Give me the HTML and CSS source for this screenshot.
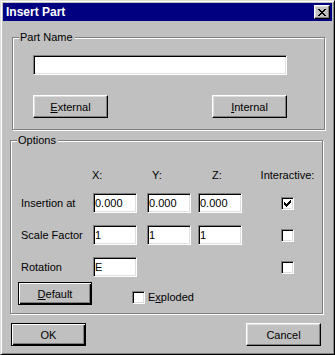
FILE: index.html
```html
<!DOCTYPE html>
<html lang="en">
<head>
  <meta charset="UTF-8">
  <title>Insert Part</title>
  <link rel="stylesheet" href="styles.css">
</head>
<body>
  <div class="window">
    <div class="titlebar">
      <span class="title">Insert Part</span>
      <button class="closeButton" aria-label="Close">
        <svg width="8" height="7" viewBox="0 0 8 7" shape-rendering="crispEdges">
          <path d="M0 0h2v1h-2zM6 0h2v1h-2zM1 1h2v1h-2zM5 1h2v1h-2zM2 2h4v1h-4zM3 3h2v1h-2zM2 4h4v1h-4zM1 5h2v1h-2zM5 5h2v1h-2zM0 6h2v1h-2zM6 6h2v1h-2z" fill="#000"/>
        </svg>
      </button>
    </div>
    <div class="content">
      <fieldset class="group partGroup">
        <legend>Part Name</legend>
        <input class="field nameField" type="text" value="">
        <div class="partButtons">
          <button class="btn"><u>E</u>xternal</button>
          <button class="btn"><u>I</u>nternal</button>
        </div>
      </fieldset>
      <fieldset class="group optionsGroup">
        <legend>Options</legend>
        <div class="optionsGrid">
          <span></span>
          <span class="colHead headX">X:</span>
          <span class="colHead headY">Y:</span>
          <span class="colHead headZ">Z:</span>
          <span class="colHead headInteractive">Interactive:</span>

          <span class="rowLabel">Insertion at</span>
          <input class="field coordField" type="text" value="0.000">
          <input class="field coordField" type="text" value="0.000">
          <input class="field coordField" type="text" value="0.000">
          <span class="check">
            <svg width="7" height="7" viewBox="0 0 7 7" shape-rendering="crispEdges">
              <path d="M6 0h1v1h-1zM5 1h2v1h-2zM0 2h1v1h-1zM4 2h3v1h-3zM0 3h2v1h-2zM3 3h3v1h-3zM0 4h5v1h-5zM1 5h3v1h-3zM2 6h1v1h-1z" fill="#000"/>
            </svg>
          </span>

          <span class="rowLabel">Scale Factor</span>
          <input class="field coordField" type="text" value="1">
          <input class="field coordField" type="text" value="1">
          <input class="field coordField" type="text" value="1">
          <span class="check"></span>

          <span class="rowLabel">Rotation</span>
          <input class="field coordField" type="text" value="E">
          <span></span>
          <span></span>
          <span class="check"></span>
        </div>
        <div class="optionsFoot">
          <button class="btn btnDefault"><u>D</u>efault</button>
          <label class="checkLabel">
            <span class="check"></span>
            <span>E<u>x</u>ploded</span>
          </label>
        </div>
      </fieldset>
      <div class="dialogButtons">
        <button class="btn btnDefault">OK</button>
        <button class="btn">Cancel</button>
      </div>
    </div>
  </div>
</body>
</html>
```

FILE: styles.css
```css
* {
  margin: 0;
  padding: 0;
  box-sizing: border-box;
}
body {
  font-family: "Liberation Sans", Arial, sans-serif;
  font-size: 11px;
  color: #000;
  background-color: #c0c0c0;
}
u {
  text-decoration: underline;
  text-underline-offset: 1px;
}
.window {
  width: 335px;
  height: 355px;
  padding: 2px;
  background-color: #c0c0c0;
  border: 1px solid;
  border-color: #dfdfdf #000 #000 #dfdfdf;
  box-shadow: inset 1px 1px 0 #fff, inset -1px -1px 0 #808080;
}
.titlebar {
  height: 18px;
  display: flex;
  align-items: center;
  padding-left: 3px;
  background-color: #000080;
}
.title {
  color: #fff;
  font-size: 12px;
  font-weight: bold;
  line-height: 18px;
}
.closeButton {
  margin-left: auto;
  margin-right: 2px;
  width: 16px;
  height: 14px;
  display: flex;
  align-items: center;
  justify-content: center;
  background-color: #c0c0c0;
  border: 1px solid;
  border-color: #fff #000 #000 #fff;
  box-shadow: inset -1px -1px 0 #808080, inset 1px 1px 0 #dfdfdf;
}
.closeButton svg {
  display: block;
  margin-left: -1px;
}
.group {
  border: 1px solid #808080;
  box-shadow: 1px 1px 0 #fff, inset 1px 1px 0 #fff;
  min-inline-size: 0;
}
.group legend {
  margin-left: 6px;
  padding: 0 2px 0 1px;
  line-height: 13px;
  background-color: #c0c0c0;
}
.btn {
  width: 75px;
  height: 23px;
  font-family: inherit;
  font-size: 11px;
  color: #000;
  background-color: #c0c0c0;
  border: 1px solid;
  border-color: #fff #000 #000 #fff;
  box-shadow: inset -1px -1px 0 #808080, inset 1px 1px 0 #dfdfdf;
}
.btnDefault {
  border: 1px solid #000;
  box-shadow: inset 1px 1px 0 #fff, inset -1px -1px 0 #000, inset -2px -2px 0 #808080;
}
.field {
  display: block;
  height: 20px;
  padding: 0 2px 0 1px;
  font-family: inherit;
  font-size: 11px;
  color: #000;
  background-color: #fff;
  border: 1px solid;
  border-color: #808080 #fff #fff #808080;
  box-shadow: inset 1px 1px 0 #000, inset -1px -1px 0 #dfdfdf;
  outline: none;
}
.check {
  width: 13px;
  height: 13px;
  display: flex;
  align-items: center;
  justify-content: center;
  background-color: #fff;
  border: 1px solid;
  border-color: #808080 #fff #fff #808080;
  box-shadow: inset 1px 1px 0 #000, inset -1px -1px 0 #dfdfdf;
}

/* part name */
.partGroup {
  margin: 10px 0 0 9px;
  width: 313px;
  padding: 11px 0 11px 0;
}
.nameField {
  margin-left: 20px;
  width: 254px;
}
.partButtons {
  margin: 20px 0 0 20px;
  width: 254px;
  display: flex;
  justify-content: space-between;
}

/* options */
.optionsGroup {
  margin: 4px 0 0 7px;
  width: 313px;
  padding: 22px 0 8px 0;
}
.optionsGrid {
  margin-left: 7px;
  display: grid;
  grid-template-columns: 75px 54px 51px 83px 13px;
  grid-template-rows: 12px 20px 20px 20px;
  row-gap: 12px;
  align-items: center;
}
.colHead {
  line-height: 12px;
  white-space: nowrap;
}
.headX {
  margin-left: -1px;
}
.headY {
  margin-left: 5px;
}
.headZ {
  margin-left: 14px;
}
.headInteractive {
  justify-self: center;
}
.rowLabel {
  padding-left: 3px;
}
.coordField {
  width: 44px;
}
.optionsFoot {
  margin: 5px 0 0 7px;
  display: flex;
  align-items: flex-start;
}
.optionsFoot .btn {
  width: 74px;
}
.checkLabel {
  margin: 9px 0 0 40px;
  display: flex;
  align-items: center;
  gap: 3px;
  line-height: 13px;
}

/* dialog buttons */
.dialogButtons {
  margin-top: 9px;
  padding: 0 11px 0 8px;
  display: flex;
  justify-content: space-between;
}
```
